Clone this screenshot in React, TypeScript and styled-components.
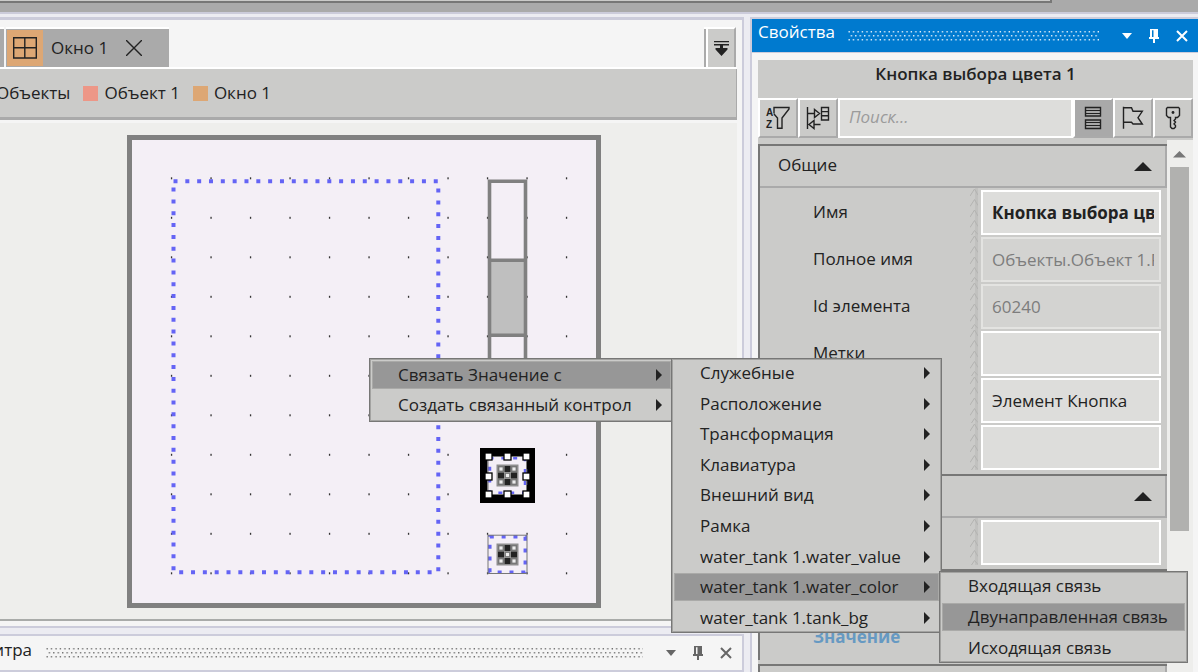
import React from 'react';
import styled, { createGlobalStyle, css } from 'styled-components';

const c = {
  face: '#cbcbc9',
  faceDark: '#aaaaaa',
  edge: '#777776',
  panel: '#f5f5f5',
  lavender: '#ccccdb',
  gutter: '#ececf2',
  canvas: '#eeeeec',
  field: '#dddddb',
  ink: '#222222',
  accent: '#007acf',
};

const GlobalStyle = createGlobalStyle`
  *, *::before, *::after { box-sizing: border-box; }
  body { margin: 0; }
  body, button, input {
    font-family: 'Open Sans', 'Noto Sans', sans-serif;
    font-size: 17px;
    line-height: 24px;
    color: ${c.ink};
  }
  button { border: 0; padding: 0; margin: 0; background: none; }
  svg { display: block; flex: none; }
`;

const Screen = styled.div`
  position: relative;
  height: 100vh;
  overflow: hidden;
  display: flex;
  flex-direction: column;
  background: ${c.gutter};
`;

const TopStrip = styled.div`
  flex: none;
  height: 14px;
  padding-right: 146px;
  background: ${c.faceDark};
  border-bottom: 2px solid ${c.lavender};
`;

const StripBox = styled.div`
  height: 3px;
  background: ${c.face};
  border-right: 2px solid ${c.edge};
  border-bottom: 2px solid ${c.edge};
`;

const Columns = styled.div`
  flex: 1;
  min-height: 0;
  display: flex;
  gap: 6px;
  padding-top: 3px;
`;

const LeftColumn = styled.div`
  flex: 1;
  min-width: 0;
  display: flex;
  flex-direction: column;
  gap: 6px;
`;

const DocumentPanel = styled.main`
  flex: 1;
  min-height: 0;
  display: flex;
  flex-direction: column;
  padding-right: 5px;
  background: ${c.panel};
  border-top: 3px solid ${c.lavender};
  border-right: 2px solid ${c.lavender};
  border-bottom: 2px solid ${c.lavender};
  padding-bottom: 5px;
`;

const TabBar = styled.div`
  flex: none;
  display: flex;
  height: 49px;
  padding-top: 7px;
  border-bottom: 2px solid #ffffff;
`;

const TabEdge = styled.div`
  width: 4px;
  margin-right: 2px;
  background: ${c.faceDark};
  border-top: 2px solid #ffffff;
`;

const Tab = styled.div`
  display: flex;
  align-items: center;
  width: 163px;
  background: ${c.faceDark};
  border-top: 2px solid #ffffff;
`;

const TabTile = styled.span`
  display: flex;
  align-items: center;
  justify-content: center;
  width: 36px;
  height: 36px;
  margin: 0 8px 0 1px;
  background: #dda774;
`;

const TabLabel = styled.span`
  width: 75px;
  white-space: nowrap;
`;

const TabMenuButton = styled.button`
  display: flex;
  align-items: center;
  justify-content: center;
  width: 32px;
  margin: 0 1px 0 auto;
  background: ${c.face};
  border-top: 2px solid #ffffff;
  border-right: 2px solid ${c.faceDark};
  box-shadow: inset 2px 0 ${c.faceDark}, inset 4px 0 #ffffff;
  padding-left: 4px;
`;

const Crumbs = styled.nav`
  flex: none;
  display: flex;
  align-items: center;
  gap: 13px;
  height: 51px;
  margin-bottom: 3px;
  overflow: hidden;
  background: ${c.face};
  border-right: 1px solid ${c.faceDark};
  border-bottom: 3px solid ${c.faceDark};
`;

const Crumb = styled.a<{ $swatch?: string }>`
  display: flex;
  align-items: center;
  gap: 6px;
  color: inherit;
  text-decoration: none;
  white-space: nowrap;
  &:first-child {
    margin-left: -4px;
  }
  ${(p) =>
    p.$swatch &&
    css`
      &::before {
        content: '';
        width: 15px;
        height: 15px;
        background: ${p.$swatch};
      }
    `}
`;

const Workspace = styled.div`
  flex: 1;
  min-height: 0;
  overflow: hidden;
  padding: 12px 0 0 127px;
  background: ${c.canvas};
  border-bottom: 2px solid #a9aba9;
`;

const Sheet = styled.div`
  width: 474px;
  height: 473px;
  border: 5px solid #808080;
  background: #f4eff6;
`;

const PalettePanel = styled.section`
  flex: none;
  height: 38px;
  display: flex;
  align-items: center;
  gap: 14px;
  padding-right: 10px;
  background: ${c.panel};
  border-top: 2px solid ${c.lavender};
  border-right: 2px solid ${c.lavender};
  border-bottom: 2px solid ${c.lavender};
`;

const PaletteTitle = styled.span`
  display: flex;
  justify-content: flex-end;
  width: 32px;
  padding-bottom: 6px;
  overflow: hidden;
  white-space: nowrap;
`;

const Properties = styled.aside`
  flex: none;
  width: 448px;
  display: flex;
  flex-direction: column;
  background: ${c.panel};
  border-left: 2px solid ${c.lavender};
  border-top: 2px solid ${c.lavender};
`;

const TitleBar = styled.header`
  flex: none;
  display: flex;
  align-items: center;
  gap: 14px;
  height: 34px;
  padding: 0 10px 0 6px;
  color: #ffffff;
  background: ${c.accent};
  border-bottom: 1px solid ${c.lavender};
`;

const TitleText = styled.span`
  width: 76px;
  padding-bottom: 8px;
  white-space: nowrap;
`;

const Grip = styled.span`
  flex: 1;
  height: 12px;
  min-width: 0;
`;

const WindowButtons = styled.div<{ $color?: string }>`
  display: flex;
  align-items: center;
  gap: 16px;
  padding-left: 9px;
  color: ${(p) => p.$color ?? 'inherit'};
`;

const IconButton = styled.button`
  display: flex;
  color: inherit;
`;

const PropsBody = styled.div`
  flex: 1;
  min-height: 0;
  display: flex;
  flex-direction: column;
  margin: 7px 5px 0 6px;
  background: ${c.face};
`;

const ObjectName = styled.h2`
  flex: none;
  height: 38px;
  margin: 0;
  padding: 2px 0 0;
  text-align: center;
  font-size: 17px;
  line-height: 24px;
  font-weight: 600;
`;

const ToolRow = styled.div`
  flex: none;
  display: flex;
  height: 40px;
`;

const ToolButton = styled.button<{ $active?: boolean }>`
  display: flex;
  align-items: center;
  justify-content: center;
  width: 40px;
  border-style: solid;
  border-width: 2px;
  border-color: #ffffff ${c.faceDark} ${c.faceDark} #ffffff;
  background: ${(p) => (p.$active ? '#a9a9a9' : c.face)};
`;

const Search = styled.input`
  flex: 1;
  min-width: 0;
  padding: 0 9px 2px;
  border: 2px solid #ffffff;
  border-radius: 0;
  outline: 0;
  background: ${c.field};
  &::placeholder {
    color: #9b9b9b;
    font-style: italic;
    opacity: 1;
  }
`;

const ScrollArea = styled.div`
  flex: 1;
  min-height: 0;
  display: flex;
`;

const Groups = styled.div`
  flex: 1;
  min-width: 0;
  display: flex;
  flex-direction: column;
  gap: 4px;
  padding-top: 6px;
  overflow: hidden;
`;

const Group = styled.section`
  flex: none;
  border-top: 2px solid ${c.edge};
  border-left: 2px solid ${c.edge};
`;

const GroupHeader = styled.button`
  display: flex;
  align-items: center;
  justify-content: space-between;
  width: 100%;
  height: 42px;
  padding: 0 13px 0 18px;
  border-right: 2px solid ${c.faceDark};
  border-bottom: 2px solid ${c.faceDark};
`;

const GroupTitle = styled.span`
  padding-bottom: 2px;
`;

const PropRow = styled.div`
  display: flex;
  height: 47px;
  padding: 0 6px 0 53px;
`;

const PropLabel = styled.label<{ $link?: boolean }>`
  flex: 1;
  padding-top: 12px;
  white-space: nowrap;
  ${(p) =>
    p.$link &&
    css`
      color: #6699c2;
      font-weight: 700;
    `}
`;

const PropField = styled.input<{ $bold?: boolean }>`
  width: 180px;
  height: 45px;
  margin: 2px 0 0 3px;
  padding: 0 5px 0 9px;
  border: 2px solid #ffffff;
  border-radius: 0;
  outline: 0;
  background: ${c.field};
  font-weight: ${(p) => (p.$bold ? 700 : 400)};
  &:disabled {
    color: #7d7d7d;
    background: #d3d3d1;
    border-color: #e3e3e1;
  }
`;

const ScrollBar = styled.div`
  flex: none;
  width: 26px;
  margin-top: 2px;
  padding: 10px 4px 0 3px;
  background: ${c.canvas};
`;

const ScrollThumb = styled.div`
  height: 364px;
  margin-top: 9px;
  background: #b1b1af;
`;

const Menu = styled.ul<{ $x: number; $y: number; $w: number; $h: number; $pad?: number }>`
  position: absolute;
  left: ${(p) => p.$x}px;
  top: ${(p) => p.$y}px;
  width: ${(p) => p.$w}px;
  height: ${(p) => p.$h}px;
  display: grid;
  grid-auto-rows: 1fr;
  align-items: center;
  margin: 0;
  padding: ${(p) => p.$pad ?? 0}px 3px;
  list-style: none;
  background: ${c.face};
  box-shadow: inset 0 0 0 1px ${c.edge}, inset 0 0 0 2px #a3a3a1;
`;

const MenuItem = styled.button<{ $active?: boolean }>`
  display: flex;
  align-items: center;
  justify-content: space-between;
  width: 100%;
  height: 28px;
  padding: 0 9px 0 26px;
  white-space: nowrap;
  background: ${(p) => (p.$active ? '#979797' : 'transparent')};
  box-shadow: ${(p) => (p.$active ? 'inset 0 0 0 1px #aaaaa8' : 'none')};
`;

const DotGrip = ({ id, color }: { id: string; color: string }) => (
  <Grip>
    <svg width="100%" height="12" aria-hidden="true">
      <defs>
        <pattern id={id} width="4.45" height="8" patternUnits="userSpaceOnUse">
          <rect x="0.5" y="1" width="1.3" height="1.5" fill={color} />
          <rect x="2.7" y="5" width="1.3" height="1.5" fill={color} />
        </pattern>
      </defs>
      <rect width="100%" height="12" fill={`url(#${id})`} />
    </svg>
  </Grip>
);

const DownIcon = () => (
  <svg width="10" height="6" fill="currentColor" aria-hidden="true">
    <path d="M0 0h10L5 6z" />
  </svg>
);

const PinIcon = () => (
  <svg width="12" height="16" fill="currentColor" aria-hidden="true">
    <path fillRule="evenodd" d="M2 1h8v8h1v2H7v4H5v-4H1V9h1zM4 2.300v6.700h1.500V2.300z" />
  </svg>
);

const CrossIcon = () => (
  <svg width="12" height="12" stroke="currentColor" strokeWidth="2" aria-hidden="true">
    <path d="M1 1l10 10M11 1L1 11" />
  </svg>
);

const WindowTools = ({ color }: { color?: string }) => (
  <WindowButtons $color={color}>
    <IconButton aria-label="Меню панели"><DownIcon /></IconButton>
    <IconButton aria-label="Закрепить"><PinIcon /></IconButton>
    <IconButton aria-label="Закрыть"><CrossIcon /></IconButton>
  </WindowButtons>
);

const UpArrow = () => (
  <svg width="18" height="9" fill="#222" aria-hidden="true">
    <path d="M0 9L9 0l9 9z" />
  </svg>
);

const RightArrow = () => (
  <svg width="6" height="12" fill="#222" aria-hidden="true">
    <path d="M0 0l6 6-6 6z" />
  </svg>
);

const Splitter = () => (
  <svg width="8" height="47" aria-hidden="true">
    <rect x="5" width="3" height="47" fill="#c1c1bf" />
    <path
      d="M0 8L4.500 1 8 7M0 18.500L4.500 11.500 8 17.500M0 29L4.500 22 8 28M0 39.500L4.500 32.500 8 38.500M1.500 47L4.500 42.500 8 46.500"
      fill="none"
      stroke="#b3b3b1"
    />
  </svg>
);

const ToolIcon = ({ children }: { children: React.ReactNode }) => (
  <svg width="24" height="24" fill="none" stroke="#222" strokeWidth="1.400" overflow="visible" aria-hidden="true">
    {children}
  </svg>
);

const IconLetter = styled.text`
  font-family: 'Liberation Sans', sans-serif;
  font-size: 10px;
  font-weight: 700;
  fill: #222;
  stroke: none;
`;

const SwatchGrid = ({ x, y }: { x: number; y: number }) => {
  const cells = [0, 1, 2].flatMap((r) => [0, 1, 2].map((k) => [r, k]));
  return (
    <g transform={`translate(${x} ${y})`}>
      <rect width="22" height="22" fill="#8e8e8e" />
      <rect x="1.500" y="1.500" width="19" height="19" fill="#a8a8a8" />
      {cells.map(([r, k]) => {
        const odd = (r + k) % 2 === 1;
        return (
          <g key={`${r}${k}`}>
            <rect x={1.5 + k * 6.5} y={1.5 + r * 6.5} width="6" height="6" fill={odd ? '#222' : '#777'} />
            {!odd && <rect x={2.9 + k * 6.5} y={2.9 + r * 6.5} width="3.200" height="3.200" fill="#ececec" />}
          </g>
        );
      })}
    </g>
  );
};

const gridSteps = Array.from({ length: 11 }, (_, i) => i * 39.5);
const handleX = [488.5, 507.5, 526.5];
const handleY = [456.5, 476.5, 494.5];

const Drawing = () => (
  <svg width="464" height="463" viewBox="132 140 464 463" role="img" aria-label="Окно 1">
    {gridSteps.map((gy) =>
      gridSteps.map((gx) => (
        <rect key={`${gx}-${gy}`} x={170.9 + gx} y={177.3 + gy} width="1.300" height="2" fill="#333" />
      )),
    )}
    <rect x="173.500" y="181.300" width="264.800" height="391" fill="none" stroke="#6464f5" strokeWidth="4" strokeDasharray="4 7.830" />
    <rect x="489.500" y="260.500" width="36" height="75" fill="#bfbfbf" />
    <path d="M489.500 420V181.300H525.500V420M489.500 260.300H525.500M489.500 335.300H525.500" fill="none" stroke="#808080" strokeWidth="3.600" />
    <rect x="480" y="448" width="55" height="55" fill="#000" />
    <rect x="487.500" y="456" width="39.500" height="39" fill="#f4eff6" />
    <rect x="489.500" y="457.800" width="36" height="35.500" fill="none" stroke="#6464f5" strokeWidth="3.500" strokeDasharray="4 7.830" />
    <rect x="488" y="456.500" width="38.500" height="38" fill="none" stroke="#777" />
    <SwatchGrid x={496.5} y={464.5} />
    {handleY.map((hy) =>
      handleX
        .filter((hx) => !(hx === 507.5 && hy === 476.5))
        .map((hx) => (
          <rect key={`${hx}-${hy}`} x={hx - 3.5} y={hy - 3.5} width="7" height="7" fill="#fff" stroke="#000" strokeWidth="1.300" />
        )),
    )}
    <rect x="489.800" y="536.800" width="35.500" height="35.500" fill="none" stroke="#6464f5" strokeWidth="3.500" strokeDasharray="4 7.830" />
    <rect x="488" y="535.200" width="39" height="38.300" fill="none" stroke="#777" />
    <SwatchGrid x={496.5} y={543.5} />
  </svg>
);

type Row = { id: string; label?: string; name?: string; value?: string; bold?: boolean; disabled?: boolean; link?: boolean };

const generalRows: Row[] = [
  { id: 'name', label: 'Имя', value: 'Кнопка выбора цвета 1', bold: true },
  { id: 'path', label: 'Полное имя', value: 'Объекты.Объект 1.Parameters', disabled: true },
  { id: 'uid', label: 'Id элемента', value: '60240', disabled: true },
  { id: 'tags', label: 'Метки' },
  { id: 'hint', name: 'Описание', value: 'Элемент Кнопка' },
  { id: 'note', name: 'Заметка' },
];

const PropRows = ({ rows }: { rows: Row[] }) => (
  <>
    {rows.map((r) => (
      <PropRow key={r.id}>
        <PropLabel htmlFor={r.id} $link={r.link}>{r.label}</PropLabel>
        <Splitter />
        <PropField id={r.id} aria-label={r.name} defaultValue={r.value} disabled={r.disabled} $bold={r.bold} />
      </PropRow>
    ))}
  </>
);

const sources = [
  'Служебные',
  'Расположение',
  'Трансформация',
  'Клавиатура',
  'Внешний вид',
  'Рамка',
  'water_tank 1.water_value',
  'water_tank 1.water_color',
  'water_tank 1.tank_bg',
];

const MenuItems = ({ items, active, arrows }: { items: string[]; active: string; arrows?: boolean }) => (
  <>
    {items.map((item) => (
      <li key={item}>
        <MenuItem $active={item === active}>
          {item}
          {arrows && <RightArrow />}
        </MenuItem>
      </li>
    ))}
  </>
);

export default function App() {
  return (
    <Screen>
      <GlobalStyle />
      <TopStrip><StripBox /></TopStrip>
      <Columns>
        <LeftColumn>
          <DocumentPanel>
            <TabBar>
              <TabEdge />
              <Tab>
                <TabTile>
                  <svg width="24" height="22" fill="none" stroke="#222" strokeWidth="1.400" aria-hidden="true">
                    <path d="M.7.7h22.600v20.300H.7zM11.800.7v20.300M.7 10.800h22.600" />
                  </svg>
                </TabTile>
                <TabLabel>Окно 1</TabLabel>
                <IconButton aria-label="Закрыть вкладку">
                  <svg width="16" height="16" stroke="#222" strokeWidth="1.400" aria-hidden="true">
                    <path d="M0 0l16 16M16 0L0 16" />
                  </svg>
                </IconButton>
              </Tab>
              <TabMenuButton aria-label="Список вкладок">
                <svg width="15" height="15" fill="#222" aria-hidden="true">
                  <path d="M0 0h15v1.300H0zM0 3h15v1.500H0zM6 4h3v3h4.500v1.500L7.500 15 1.500 8.500V7H6z" />
                </svg>
              </TabMenuButton>
            </TabBar>
            <Crumbs aria-label="Путь">
              <Crumb href="#objects">Объекты</Crumb>
              <Crumb href="#object" $swatch="#ed9787">Объект 1</Crumb>
              <Crumb href="#window" $swatch="#dda774">Окно 1</Crumb>
            </Crumbs>
            <Workspace>
              <Sheet><Drawing /></Sheet>
            </Workspace>
          </DocumentPanel>
          <PalettePanel>
            <PaletteTitle>Палитра</PaletteTitle>
            <DotGrip id="grip-palette" color="#707070" />
            <WindowTools color="#666666" />
          </PalettePanel>
        </LeftColumn>

        <Properties>
          <TitleBar>
            <TitleText>Свойства</TitleText>
            <DotGrip id="grip-props" color="#e6f2fb" />
            <WindowTools />
          </TitleBar>
          <PropsBody>
            <ObjectName>Кнопка выбора цвета 1</ObjectName>
            <ToolRow>
              <ToolButton aria-label="Сортировка">
                <ToolIcon>
                  <IconLetter x="0" y="10">A</IconLetter>
                  <IconLetter x="0" y="22">Z</IconLetter>
                  <path d="M8 7.500V1.500H23V3L16 12V22.300H11.500V12L8 8" />
                </ToolIcon>
              </ToolButton>
              <ToolButton aria-label="Связи">
                <ToolIcon>
                  <path d="M1.500 1V23M1.500 7.500H8.500M8.500 3.500V11.500L13.500 7.500zM15.500 1.500h7V14h-7zM15.500 5.600h7M15.500 9.800h7M8 14.500v8L3 18.500zM8 18.500h6.500" />
                </ToolIcon>
              </ToolButton>
              <Search type="text" placeholder="Поиск..." aria-label="Поиск" />
              <ToolButton $active aria-label="По группам">
                <ToolIcon>
                  <path d="M4.500 1.500h15v8.500h-15zM4.500 14h15v8.500h-15z" />
                  <path d="M4.500 4.500h15M4.500 7.500h15M4.500 16.500h15M4.500 19.500h15" strokeWidth="1" />
                </ToolIcon>
              </ToolButton>
              <ToolButton aria-label="Флаг">
                <ToolIcon>
                  <path d="M2.500.7V22.700M2.500 1.700H10.500L12 5.300H21.300L17 11.700L21.300 18H12L10.500 16.300H2.500" />
                </ToolIcon>
              </ToolButton>
              <ToolButton aria-label="Ключ">
                <ToolIcon>
                  <path d="M6.500 1.500H17.500L18.500 2.500V9.500L16.500 11.500H14.500V13L13 14.500L14.500 16L13 18L14.500 19.500V21L13 22.500H11L9.500 21V11.500H7.500L5.500 9.500V2.500z" />
                  <circle cx="12" cy="6.500" r="1.400" fill="#222" stroke="none" />
                </ToolIcon>
              </ToolButton>
            </ToolRow>
            <ScrollArea>
              <Groups>
                <Group>
                  <GroupHeader><GroupTitle>Общие</GroupTitle><UpArrow /></GroupHeader>
                  <PropRows rows={generalRows} />
                </Group>
                <Group>
                  <GroupHeader aria-label="События"><GroupTitle /><UpArrow /></GroupHeader>
                  <PropRows rows={[{ id: 'event', name: 'Событие' }]} />
                </Group>
                <Group>
                  <GroupHeader aria-label="Данные"><GroupTitle /><UpArrow /></GroupHeader>
                  <PropRows rows={[{ id: 'value', label: 'Значение', link: true }]} />
                </Group>
                <Group>
                  <GroupHeader aria-label="Вид"><GroupTitle /><UpArrow /></GroupHeader>
                </Group>
              </Groups>
              <ScrollBar>
                <svg width="19" height="8" fill="#777" aria-hidden="true">
                  <path d="M3 7.500L9.500 1l6.500 6.500z" />
                </svg>
                <ScrollThumb />
              </ScrollBar>
            </ScrollArea>
          </PropsBody>
        </Properties>
      </Columns>

      <Menu $x={369} $y={358} $w={305} $h={64} $pad={2}>
        <MenuItems items={['Связать Значение с', 'Создать связанный контрол']} active="Связать Значение с" arrows />
      </Menu>
      <Menu $x={671} $y={358} $w={271} $h={275}>
        <MenuItems items={sources} active="water_tank 1.water_color" arrows />
      </Menu>
      <Menu $x={939} $y={571} $w={249} $h={92}>
        <MenuItems
          items={['Входящая связь', 'Двунаправленная связь', 'Исходящая связь']}
          active="Двунаправленная связь"
        />
      </Menu>
    </Screen>
  );
}
